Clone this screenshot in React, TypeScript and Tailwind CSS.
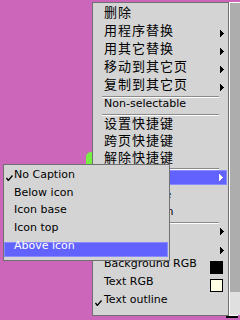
import React from "react";

type Row =
  | {
      kind: "item";
      label: string;
      h: number;
      lh?: number;
      cjk?: boolean;
      arrow?: number;
      check?: boolean;
      swatch?: "black" | "cream";
      active?: boolean;
    }
  | { kind: "sep"; h: number; off: number };

const latin = "font-['DejaVu_Sans',sans-serif] text-[11px]";
const cjk = "font-['DejaVu_Sans','Noto_Sans_CJK_SC',sans-serif] text-[13px] tracking-[1px]";

const mainRows: Row[] = [
  { kind: "item", label: "删除", h: 18, cjk: true },
  { kind: "item", label: "用程序替换", h: 18, cjk: true, arrow: 8 },
  { kind: "item", label: "用其它替换", h: 18, cjk: true, arrow: 8 },
  { kind: "item", label: "移动到其它页", h: 18, cjk: true, arrow: 8 },
  { kind: "item", label: "复制到其它页", h: 18, cjk: true, arrow: 8 },
  { kind: "sep", h: 4, off: 2 },
  { kind: "item", label: "Non-selectable", h: 16, lh: 12 },
  { kind: "sep", h: 2, off: 0 },
  { kind: "item", label: "设置快捷键", h: 16, cjk: true },
  { kind: "item", label: "跨页快捷键", h: 17, cjk: true },
  { kind: "item", label: "解除快捷键", h: 17, cjk: true },
  { kind: "sep", h: 4, off: 2 },
  { kind: "item", label: "Caption", h: 17, arrow: 0, active: true },
  { kind: "item", label: "Caption size", h: 16 },
  { kind: "item", label: "Hide caption", h: 18 },
  { kind: "sep", h: 3, off: 1 },
  { kind: "item", label: "Font", h: 17, arrow: 4 },
  { kind: "item", label: "Size", h: 14, arrow: 6 },
  { kind: "item", label: "Background RGB", h: 18, swatch: "black" },
  { kind: "item", label: "Text RGB", h: 18, swatch: "cream" },
  { kind: "item", label: "Text outline", h: 18, check: true },
];

const subRows = [
  { label: "No Caption", h: 18, check: true },
  { label: "Below icon", h: 17 },
  { label: "Icon base", h: 18 },
  { label: "Icon top", h: 18 },
  { label: "Above icon", h: 20, active: true },
];

function Arrow({ color = "#000" }: { color?: string }) {
  return (
    <svg width="4" height="7" viewBox="0 0 4 7" shapeRendering="crispEdges">
      <polygon points="0,0 4,3.5 0,7" fill={color} />
    </svg>
  );
}

function Check() {
  return (
    <svg width="7" height="6" viewBox="0 0 7 6">
      <polyline points="0.5,3 2.3,5.5 6.5,0.5" fill="none" stroke="#000" strokeWidth="1.3" />
    </svg>
  );
}

function MainMenu() {
  return (
    <div className="absolute left-[92px] top-[2px] w-[137px] h-[314px] border border-[#707070] bg-[#d4d4d4] pt-[1px] flex flex-col">
      {mainRows.map((r, i) => {
        if (r.kind === "sep") {
          return (
            <div key={i} className="shrink-0" style={{ height: r.h, paddingTop: r.off }}>
              <div className="ml-[9px] w-[117px] h-[1px] bg-[#8a8a8a]" />
              <div className="ml-[9px] w-[117px] h-[1px] bg-white" />
            </div>
          );
        }
        if (r.active) {
          return (
            <div key={i} className="shrink-0" style={{ height: r.h }}>
              <div className="mx-[1px] h-[15px] bg-[#6262ff] border border-[#8a8aff] flex items-center justify-between pl-[10px] pr-[3px]">
                <span className={`${latin} leading-[13px] text-white`}>{r.label}</span>
                <Arrow color="#fff" />
              </div>
            </div>
          );
        }
        return (
          <div key={i} className="shrink-0 flex items-start pr-[4px]" style={{ height: r.h }}>
            <div className="w-[11px] shrink-0 pl-[2px] pt-[9px]">{r.check && <Check />}</div>
            <span
              className={`${r.cjk ? cjk : latin} flex-1 text-black whitespace-nowrap`}
              style={{ lineHeight: `${r.lh ?? r.h}px` }}
            >
              {r.label}
            </span>
            {r.arrow !== undefined && (
              <div style={{ marginTop: r.arrow }}>
                <Arrow />
              </div>
            )}
            {r.swatch && (
              <div
                className={`mt-[6px] mr-[1px] w-[13px] h-[13px] border border-black ${
                  r.swatch === "black" ? "bg-black" : "bg-[#ffffe4]"
                }`}
              />
            )}
          </div>
        );
      })}
    </div>
  );
}

function SubMenu() {
  return (
    <div className="absolute left-[3px] top-[164px] w-[167px] h-[97px] border border-[#707070] bg-[#d4d4d4] pt-[1px] flex flex-col">
      {subRows.map((r) => (
        <div key={r.label} className="relative shrink-0 flex items-start" style={{ height: r.h }}>
          {r.active && (
            <div className="absolute left-0 right-[1px] top-[5px] h-[15px] bg-[#6262ff] border border-[#8a8aff]" />
          )}
          <div className="relative w-[10px] shrink-0 pl-[2px] pt-[9px]">{r.check && <Check />}</div>
          <span className={`relative ${latin} leading-[18px] whitespace-nowrap ${r.active ? "text-white" : "text-black"}`}>
            {r.label}
          </span>
        </div>
      ))}
    </div>
  );
}

export default function App() {
  return (
    <div className="relative w-[240px] h-[320px] overflow-hidden bg-[#cc66bb]">
      {/* stuff behind the menus */}
      <div className="absolute left-[86px] top-[152px] w-[30px] h-[40px] rounded-tl-[5px] bg-[#77ee44]" />
      <div className="absolute left-[229px] top-[2px] w-[11px] h-[313px] border-l border-t border-white flex flex-col">
        <div className="flex-1 bg-[#adadad]" />
        <div className="h-[23px] bg-[#e0e0e0]" />
      </div>
      <div className="absolute left-[226px] top-[315px] w-[12px] h-[1px] bg-white" />
      <div className="absolute left-[226px] top-[316px] w-[12px] h-[2px] bg-black" />

      <MainMenu />
      <SubMenu />
    </div>
  );
}
